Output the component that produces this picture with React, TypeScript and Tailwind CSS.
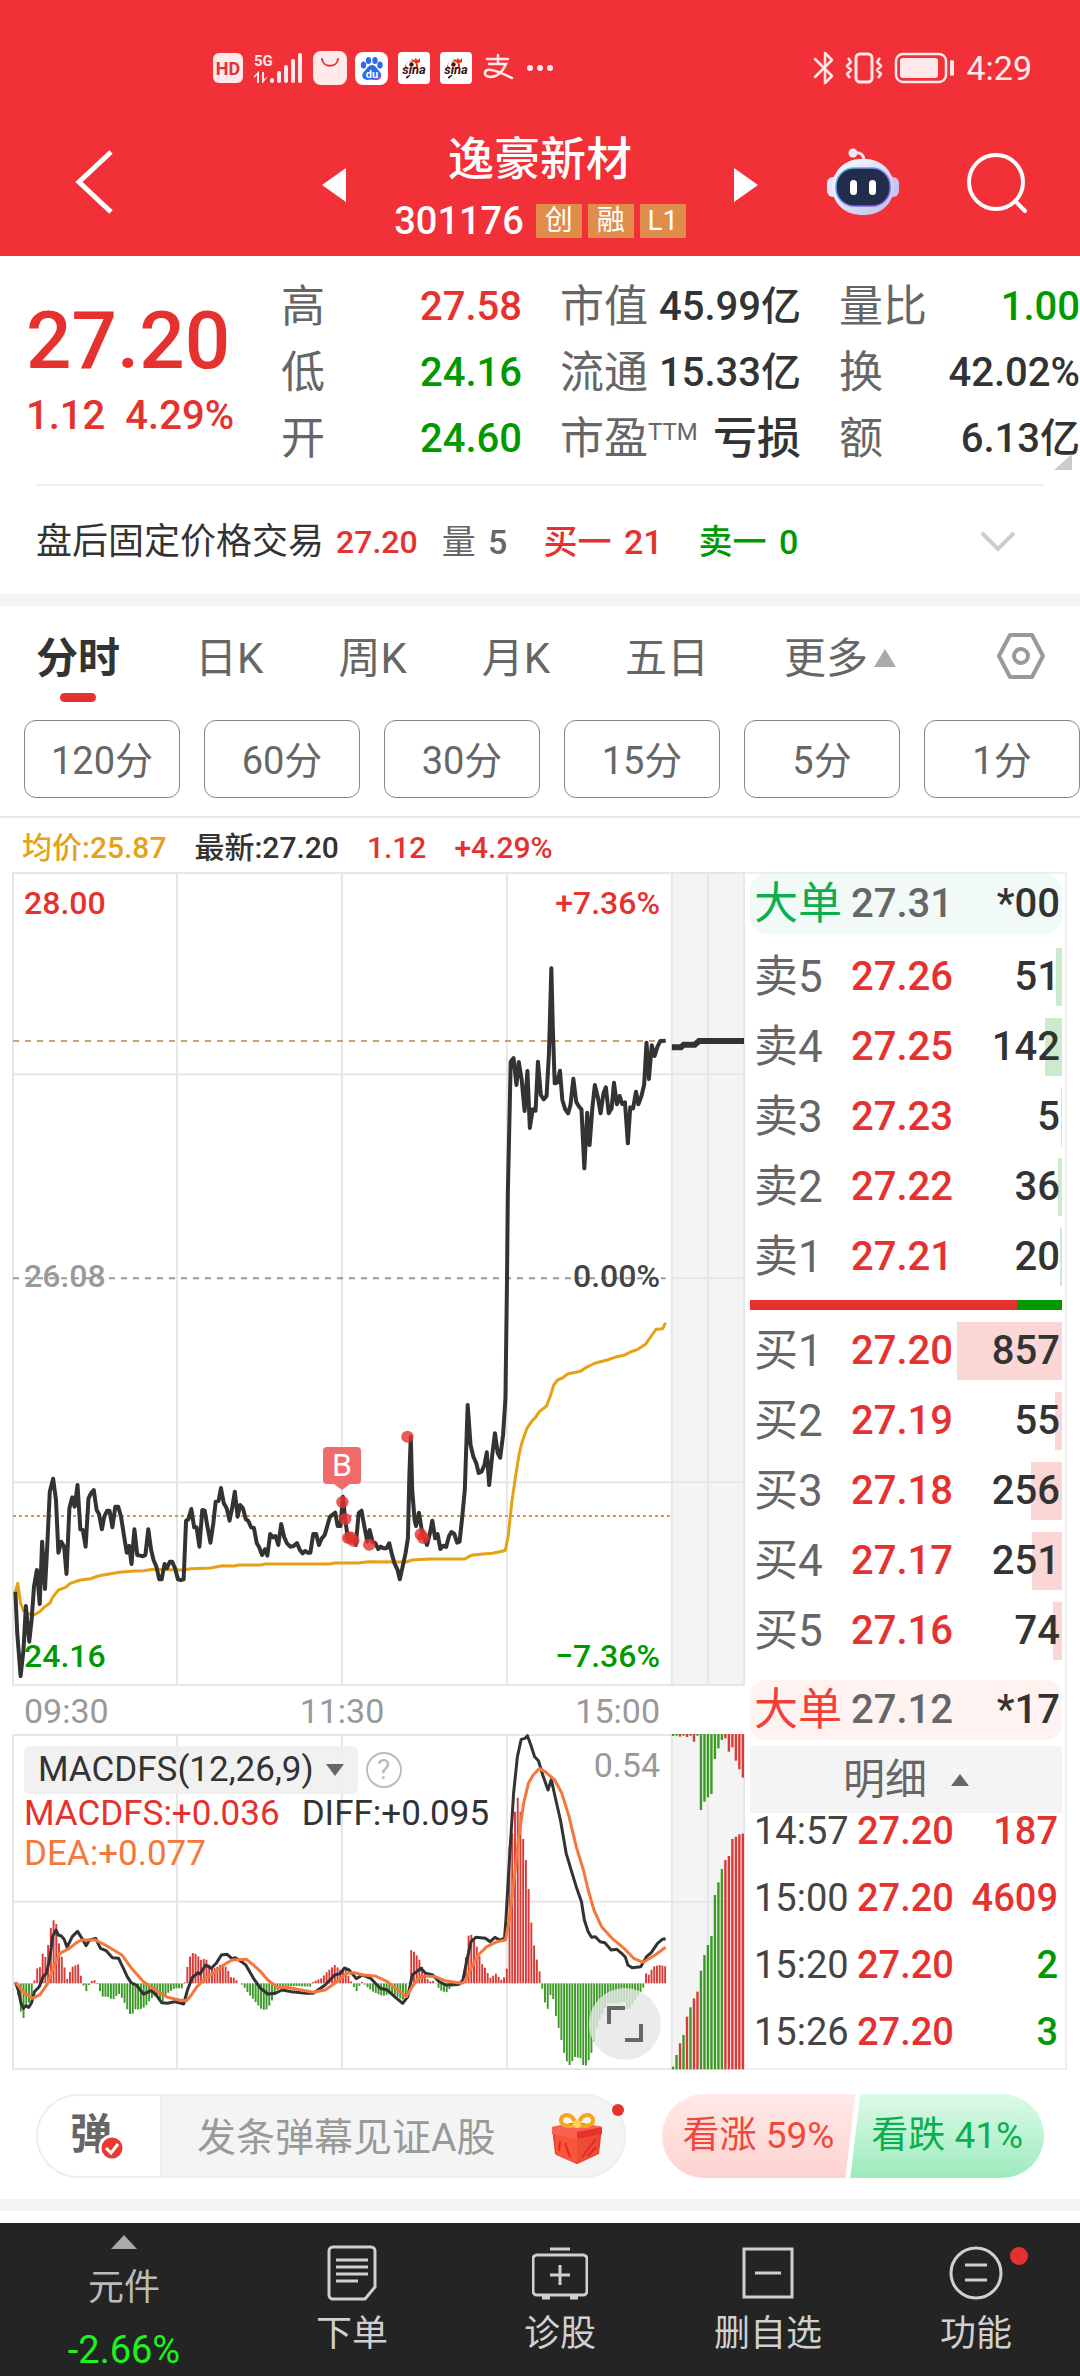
import React from 'react';
import clsx from 'clsx';

type Point = [number, number];

const STATS = [
    [
        { label: '高', value: '27.58', color: 'text-[#e5322f]' },
        { label: '低', value: '24.16', color: 'text-[#009900]' },
        { label: '开', value: '24.60', color: 'text-[#009900]' },
    ],
    [
        { label: '市值', value: '45.99亿', color: 'text-[#333333]' },
        { label: '流通', value: '15.33亿', color: 'text-[#333333]' },
        { label: '市盈', sup: 'TTM', value: '亏损', color: 'text-[#333333]' },
    ],
    [
        { label: '量比', value: '1.00', color: 'text-[#009900]' },
        { label: '换', value: '42.02%', color: 'text-[#333333]' },
        { label: '额', value: '6.13亿', color: 'text-[#333333]' },
    ],
];

const TABS = ['分时', '日K', '周K', '月K', '五日'];
const PERIODS = ['120分', '60分', '30分', '15分', '5分', '1分'];

const SELL_ORDERS = [
    { name: '卖5', price: '27.26', qty: 51 },
    { name: '卖4', price: '27.25', qty: 142 },
    { name: '卖3', price: '27.23', qty: 5 },
    { name: '卖2', price: '27.22', qty: 36 },
    { name: '卖1', price: '27.21', qty: 20 },
];

const BUY_ORDERS = [
    { name: '买1', price: '27.20', qty: 857 },
    { name: '买2', price: '27.19', qty: 55 },
    { name: '买3', price: '27.18', qty: 256 },
    { name: '买4', price: '27.17', qty: 251 },
    { name: '买5', price: '27.16', qty: 74 },
];

const TICKS = [
    { time: '14:57', price: '27.20', qty: '187', up: true },
    { time: '15:00', price: '27.20', qty: '4609', up: true },
    { time: '15:20', price: '27.20', qty: '2', up: false },
    { time: '15:26', price: '27.20', qty: '3', up: false },
];

const PRICE_LINE =
    '32,905 36,1030 43,1158 49,1080 54,948 58,1010 61,1055 66,990 71,890 77,840 83,942 88,755 94,897 99,760 104,605 111,566 117,630 122,788 128,755 134,770 139,852 145,655 151,622 156,650 162,585 168,718 173,720 179,770 185,625 190,610 196,600 202,660 207,672 213,718 218,680 224,662 229,662 235,712 241,650 247,650 253,680 259,735 265,788 270,768 275,822 281,718 287,795 293,797 299,799 304,795 310,718 316,780 321,810 327,830 333,868 338,868 344,822 349,835 355,815 360,815 366,835 372,868 378,870 384,868 389,692 394,688 400,657 406,712 411,712 417,770 423,660 428,662 434,712 440,758 446,700 451,635 457,633 462,594 468,640 474,655 480,692 486,650 491,605 497,680 502,645 508,655 514,688 519,692 525,712 531,714 537,760 542,772 548,795 554,778 559,797 565,732 571,742 576,738 582,765 588,702 594,740 600,760 607,770 614,768 621,759 627,780 633,790 638,783 644,788 649,788 655,732 661,732 667,765 673,745 679,735 684,710 690,680 695,675 701,668 706,708 712,708 717,620 722,690 727,740 733,755 738,750 744,765 750,670 756,662 762,710 768,755 773,720 779,755 785,760 791,777 796,770 802,775 808,775 814,760 819,790 825,820 831,838 836,868 842,830 848,790 853,745 856,560 859,440 862,600 867,690 870,708 876,668 882,720 887,745 893,765 899,730 904,692 910,745 915,732 921,777 927,767 933,771 939,738 944,726 950,732 956,758 961,755 966,690 972,600 978,345 984,465 990,500 996,520 1001,549 1007,545 1013,525 1018,487 1023,585 1029,500 1035,430 1041,490 1046,503 1052,435 1057,325 1060,0 1062,-290 1068,-685 1074,-696 1080,-615 1085,-684 1091,-630 1097,-537 1103,-657 1108,-486 1114,-542 1120,-538 1125,-685 1131,-585 1137,-572 1143,-582 1148,-710 1153,-965 1156,-790 1160,-620 1165,-622 1171,-658 1176,-570 1182,-542 1188,-530 1193,-555 1199,-634 1205,-565 1211,-550 1216,-542 1222,-365 1228,-532 1233,-435 1239,-550 1244,-615 1250,-580 1256,-530 1262,-590 1267,-608 1273,-530 1279,-545 1284,-622 1290,-557 1296,-582 1301,-558 1307,-563 1313,-440 1318,-548 1324,-545 1330,-595 1335,-557 1341,-580 1347,-615 1352,-742 1357,-633 1363,-734 1369,-702 1375,-730 1381,-747 1392,-748';

const AVERAGE_LINE =
    '32,905 37,880 43,940 49,962 55,970 71,975 83,965 92,952 104,940 110,922 122,900 136,893 147,880 168,870 190,866 205,858 225,853 250,847 280,843 300,842 320,838 380,840 400,836 440,834 465,827 490,828 500,825 545,825 555,822 690,822 700,819 750,819 770,815 850,816 862,810 900,807 972,807 985,796 1010,792 1030,790 1050,784 1057,780 1063,735 1070,640 1078,560 1086,490 1092,455 1102,415 1113,392 1120,382 1128,365 1143,348 1150,322 1158,285 1166,270 1176,264 1187,252 1214,244 1225,233 1245,219 1270,210 1290,200 1305,196 1318,186 1334,178 1350,163 1362,138 1372,118 1386,116 1392,98';

const TRADE_DOTS: Point[] = [[716, 636], [722, 687], [728, 744], [733, 742], [739, 752], [772, 764], [852, 440], [880, 733], [885, 744]];

const DIFF_LINE =
    '32,787 38,810 44,850 49,865 54,857 60,862 66,848 72,815 82,800 90,770 97,760 104,715 110,650 117,630 122,645 128,648 134,658 140,682 151,650 162,634 170,652 180,677 187,660 200,655 210,685 222,692 235,713 248,715 258,745 266,770 274,788 285,795 300,822 316,812 325,822 338,848 350,850 365,845 384,852 392,810 402,773 414,758 418,762 430,735 442,745 452,730 463,705 475,703 485,716 492,713 505,725 514,735 530,775 545,805 560,822 575,820 590,810 610,815 640,820 655,820 668,807 680,795 700,765 712,760 720,744 730,750 745,776 758,765 775,775 795,805 810,810 825,830 842,850 853,830 862,765 880,745 890,760 905,765 918,785 933,795 960,793 968,780 975,730 985,665 995,652 1015,655 1025,665 1035,652 1045,660 1055,655 1058,600 1064,450 1074,220 1082,110 1090,58 1098,55 1103,47 1110,75 1118,110 1126,122 1135,165 1146,210 1153,178 1160,225 1172,300 1184,400 1194,448 1205,500 1216,545 1222,600 1230,635 1237,652 1245,650 1255,665 1265,668 1278,690 1290,688 1300,700 1308,712 1313,735 1322,743 1340,740 1352,710 1362,698 1375,670 1385,658 1392,656';

const DEA_LINE =
    '32,787 40,800 52,820 67,835 83,825 100,790 112,740 125,700 145,685 160,668 170,660 200,660 220,675 255,705 275,745 300,785 325,810 350,832 375,840 390,842 400,825 412,800 430,775 450,755 470,733 485,720 515,718 530,735 545,755 560,780 580,802 605,803 630,810 655,817 680,810 700,790 725,760 740,758 760,765 785,768 810,785 850,830 862,800 875,775 890,768 910,770 930,782 965,790 972,785 985,745 1000,705 1018,680 1040,665 1057,660 1065,600 1075,480 1085,350 1095,250 1105,190 1115,165 1128,146 1140,155 1160,180 1175,220 1190,290 1205,380 1220,450 1230,510 1242,570 1258,620 1280,655 1305,685 1325,715 1345,727 1370,705 1392,682';

// histogram outline, bars are sampled from it once per minute
const HISTOGRAM: Point[] = [
    [32, 0], [38, -35], [44, -90], [49, -105], [54, -62], [66, -55], [71, 2], [77, 45], [83, 45], [88, 92], [94, 75], [99, 100], [105, 160], [111, 190], [117, 185], [122, 130], [128, 85], [134, 55], [139, 8], [145, 30], [151, 50], [156, 50], [162, 65], [168, 28], [173, 2], [179, -28], [185, -8], [190, 5], [196, 12], [202, 2], [207, -15], [213, -40], [225, -40], [236, -50], [248, -30], [258, -50], [265, -75], [275, -100], [281, -78], [293, -78], [304, -70], [316, -45], [328, -35], [340, -55], [350, -30], [365, -15], [384, -15], [389, 30], [394, 65], [400, 92], [411, 88], [420, 70], [430, 75], [440, 50], [450, 45], [465, 60], [475, 45], [485, 12], [491, 20], [497, 2], [508, -5], [519, -30], [531, -50], [548, -80], [559, -78], [571, -45], [582, -15], [600, -8], [620, -8], [649, -10], [655, 5], [672, 15], [684, 35], [700, 55], [712, 40], [720, 48], [733, 10], [739, -8], [745, -25], [752, -6], [758, 6], [765, -8], [780, -25], [800, -38], [820, -30], [842, -50], [853, -25], [859, 100], [864, 98], [876, 75], [888, 30], [897, 5], [905, 8], [910, 2], [920, -20], [933, -28], [944, -10], [961, -8], [967, 10], [973, 60], [978, 140], [984, 150], [995, 120], [1007, 60], [1018, 40], [1023, 15], [1030, 20], [1035, 32], [1050, 8], [1055, 20], [1060, 45], [1064, 400], [1074, 470], [1080, 562], [1086, 550], [1092, 460], [1097, 395], [1103, 340], [1108, 225], [1114, 145], [1120, 80], [1126, 60], [1131, 8], [1137, -40], [1143, -78], [1148, -75], [1153, -12], [1160, -75], [1165, -120], [1171, -145], [1177, -195], [1182, -220], [1188, -245], [1194, -245], [1200, -220], [1215, -225], [1222, -255], [1230, -235], [1239, -200], [1250, -120], [1270, -60], [1290, -60], [1305, -55], [1313, -85], [1330, -45], [1345, -15], [1351, 30], [1358, 25], [1365, 50], [1380, 55], [1400, 48],
];

// after-hours columns: [bottom of the upper bar, top of the lower bar], upper colour, lower colour
const AFTER_HOURS: [number, number, string, string][] = [
    [48, 1040, 'g', 'g'], [47, 1005, 'g', 'g'], [50, 970, 'r', 'r'], [47, 945, 'g', 'g'], [51, 890, 'r', 'r'], [47, 862, 'r', 'g'], [65, 835, 'r', 'r'],
    [47, 815, 'g', 'r'], [270, 752, 'g', 'g'], [245, 705, 'g', 'g'], [232, 675, 'g', 'g'], [222, 648, 'g', 'g'], [117, 525, 'g', 'g'], [85, 487, 'g', 'g'],
    [60, 447, 'g', 'g'], [55, 420, 'r', 'r'], [95, 408, 'r', 'r'], [82, 357, 'r', 'r'], [122, 350, 'r', 'r'], [148, 343, 'r', 'r'], [173, 341, 'r', 'r'],
];

const barColor = (code: string) => (code === 'r' ? '#d93a36' : '#3a9a25');

const sampleHistogram = (x: number) => {
    const next = HISTOGRAM.findIndex(point => point[0] >= x);
    if (next <= 0) return 0;
    const [x0, y0] = HISTOGRAM[next - 1];
    const [x1, y1] = HISTOGRAM[next];
    return y0 + ((x - x0) / (x1 - x0)) * (y1 - y0);
};

const BARS: Point[] = Array.from({ length: 239 }, (_, i) => {
    const x = 32 + i * 5.71;
    return [x, sampleHistogram(x)];
});

const Triangle: React.FC<{ className?: string; points: string }> = ({ className, points }) => (
    <svg className={className} viewBox="0 0 24 24" preserveAspectRatio="none" fill="currentColor" aria-hidden="true">
        <polygon points={points} />
    </svg>
);

const UP = '12,0 24,24 0,24';
const DOWN = '0,0 24,0 12,24';
const LEFT = '0,12 24,0 24,24';
const RIGHT = '0,0 24,12 0,24';

const SinaIcon: React.FC = () => (
    <svg className="h-8 w-8" viewBox="0 0 32 32" aria-label="sina">
        <rect width="32" height="32" rx="4" fill="#fff" />
        <path d="M7 16c0-5 4-7 7-7l-1-2 4 1 0-2 3 2 2-2 0 4c-1 1-2 1-3 1 2 2 1 5-1 6z" fill="#e8391d" />
        <ellipse cx="13" cy="13" rx="5" ry="3.600" fill="#fff" />
        <circle cx="13.500" cy="12.500" r="2.200" fill="#3a1410" />
        <text x="16" y="22" textAnchor="middle" fontSize="13" fontWeight="700" fontStyle="italic" fill="#3a1410">sina</text>
        <path d="M10 24c-1 1-2 2-1 2l3-3" fill="none" stroke="#3a1410" strokeWidth="1.200" />
    </svg>
);

const StatusBar: React.FC = () => (
    <div className="flex h-[126px] items-center justify-between pt-[10px] pr-12 pl-[213px] text-[#ffe9ea]">
        <div className="flex items-center">
            <svg className="h-[30px] w-[30px]" viewBox="0 0 30 30" aria-hidden="true">
                <rect width="30" height="30" rx="6" fill="#ffe9ea" />
                <text x="15" y="22" textAnchor="middle" fontSize="18" fontWeight="700" fill="#dd3339">HD</text>
            </svg>
            <svg className="ml-[11px] h-8 w-[50px]" viewBox="0 0 50 32" fill="currentColor" aria-hidden="true">
                <text x="0" y="14" fontSize="15" fontWeight="700">5G</text>
                <path d="M0 24l5-5v12H3v-8l-3 3zM8 20h2v7l4-3-5 7H8z" />
                <rect x="16" y="26" width="4" height="5" rx="2" />
                <rect x="23" y="19" width="4" height="12" rx="2" />
                <rect x="30" y="13" width="4" height="18" rx="2" />
                <rect x="37" y="7" width="4" height="24" rx="2" />
                <rect x="44" y="1" width="4" height="30" rx="2" />
            </svg>
            <svg className="ml-[9px] h-[34px] w-[34px]" viewBox="0 0 34 34" aria-hidden="true">
                <rect width="34" height="34" rx="8" fill="#ffe9ea" />
                <path d="M9 8c1 9 15 9 16 0" fill="none" stroke="#dd3339" strokeWidth="2" strokeLinecap="round" />
            </svg>
            <svg className="ml-2 h-[33px] w-[33px]" viewBox="0 0 33 33" aria-hidden="true">
                <rect width="33" height="33" rx="8" fill="#fff" />
                <g fill="#2a6cf0">
                    <ellipse cx="8.500" cy="13" rx="2.700" ry="3.600" />
                    <ellipse cx="13.500" cy="8.500" rx="2.700" ry="3.500" />
                    <ellipse cx="20" cy="8.500" rx="2.700" ry="3.500" />
                    <ellipse cx="25" cy="13" rx="2.700" ry="3.600" />
                    <path d="M17 13c4 0 5 4 8 7 3 4 0 8-4 8-3 0-5-1-8 0-5 0-7-4-5-7 3-3 5-8 9-8z" />
                </g>
                <path d="M13 28c3-1 5 0 8 0 4 0 6-3 5-6l-4 4z" fill="#a04be0" />
                <text x="17" y="26" textAnchor="middle" fontSize="11" fontWeight="700" fill="#fff">du</text>
            </svg>
            <div className="ml-[10px] flex gap-[10px]">
                <SinaIcon />
                <SinaIcon />
            </div>
            <svg className="ml-[10px] h-[30px] w-8" viewBox="0 0 32 30" fill="none" stroke="currentColor" strokeWidth="2.500" strokeLinecap="round" aria-hidden="true">
                <path d="M16 2v9M5 6h21M7 11h17c-4 9-10 13-16 13-8-1-6-8 1-7 8 1 14 5 21 8" />
            </svg>
            <svg className="ml-[13px] h-2 w-[27px]" viewBox="0 0 27 8" fill="currentColor" aria-hidden="true">
                <circle cx="3" cy="4" r="3" />
                <circle cx="13" cy="4" r="3" />
                <circle cx="23" cy="4" r="3" />
            </svg>
        </div>
        <div className="flex items-center">
            <svg className="h-[34px] w-6" viewBox="0 0 24 34" fill="none" stroke="currentColor" strokeWidth="2.500" strokeLinecap="round" strokeLinejoin="round" aria-hidden="true">
                <path d="M3 8l17 17-7 7V2l7 7L3 26" />
            </svg>
            <svg className="ml-2 h-8 w-10" viewBox="0 0 40 32" fill="none" stroke="currentColor" strokeWidth="3" strokeLinejoin="round" aria-hidden="true">
                <rect x="12" y="2" width="16" height="28" rx="4" />
                <path d="M4 6l3 4-4 4 4 4-4 4 3 4M36 6l-3 4 4 4-4 4 4 4-3 4" strokeWidth="2.500" />
            </svg>
            <svg className="ml-[10px] h-8 w-[62px]" viewBox="0 0 62 32" aria-hidden="true">
                <rect x="2" y="2" width="50" height="28" rx="7" fill="none" stroke="currentColor" strokeWidth="2.500" />
                <rect x="6" y="6" width="38" height="20" rx="3" fill="currentColor" />
                <rect x="56" y="8" width="4" height="16" rx="2" fill="currentColor" />
            </svg>
            <span className="ml-[10px] text-[34px] leading-10">4:29</span>
        </div>
    </div>
);

const RobotIcon: React.FC = () => (
    <svg className="h-[68px] w-[72px]" viewBox="0 0 72 68" aria-hidden="true">
        <defs>
            <linearGradient id="shell" x1="0" y1="0" x2="1" y2="1">
                <stop offset="0" stopColor="#ffffff" />
                <stop offset="1" stopColor="#b9bdea" />
            </linearGradient>
            <linearGradient id="rim" x1="0" y1="0" x2="1" y2="1">
                <stop offset="0" stopColor="#5fc8f0" />
                <stop offset="1" stopColor="#8a3be8" />
            </linearGradient>
        </defs>
        <path d="M27 5c7-1 10 2 10 8" fill="none" stroke="#e6e2f2" strokeWidth="3" />
        <circle cx="26" cy="5" r="4.500" fill="#eceaf7" />
        <rect x="0" y="29" width="12" height="20" rx="6" fill="#e6e7f8" />
        <rect x="60" y="29" width="12" height="20" rx="6" fill="#c3c7ef" />
        <rect x="5" y="11" width="62" height="56" rx="28" fill="url(#shell)" />
        <rect x="9" y="20" width="54" height="38" rx="18" fill="#222c4c" stroke="url(#rim)" strokeWidth="1.500" />
        <rect x="23" y="32" width="7" height="15" rx="3.500" fill="#fff" />
        <rect x="42" y="32" width="7" height="15" rx="3.500" fill="#fff" />
    </svg>
);

const Header: React.FC = () => (
    <header className="bg-[#f13038] text-white">
        <StatusBar />
        <div className="grid h-[130px] grid-cols-[1fr_auto_1fr] items-center">
            <button type="button" aria-label="返回" className="mb-[18px] justify-self-start pl-[74px]">
                <svg className="h-16 w-10" viewBox="0 0 40 64" fill="none" stroke="currentColor" strokeWidth="5" aria-hidden="true">
                    <path d="M37 2L5 32l32 30" />
                </svg>
            </button>
            <div className="flex items-center gap-12 self-start">
                <button type="button" aria-label="上一只" className="mb-2">
                    <Triangle className="h-[34px] w-6" points={LEFT} />
                </button>
                <div className="pt-px text-center">
                    <h1 className="text-[46px] leading-[64px] font-medium">逸豪新材</h1>
                    <div className="flex h-[60px] items-center justify-center gap-[6px]">
                        <span className="mr-[6px] text-[38px] font-medium">301176</span>
                        {['创', '融', 'L1'].map(tag => (
                            <span key={tag} className="h-[34px] w-[46px] bg-[#e08d4b] text-[28px] leading-[34px]">{tag}</span>
                        ))}
                    </div>
                </div>
                <button type="button" aria-label="下一只" className="mb-2">
                    <Triangle className="h-[34px] w-6" points={RIGHT} />
                </button>
            </div>
            <div className="mb-[18px] flex items-center justify-end gap-[67px] pr-[52px]">
                <button type="button" aria-label="智能助手">
                    <RobotIcon />
                </button>
                <button type="button" aria-label="搜索">
                    <svg className="h-[62px] w-[62px]" viewBox="0 0 62 62" fill="none" stroke="currentColor" strokeWidth="4" strokeLinecap="round" aria-hidden="true">
                        <circle cx="30" cy="31" r="27" />
                        <path d="M49 50l10 10" />
                    </svg>
                </button>
            </div>
        </div>
    </header>
);

const Quote: React.FC = () => (
    <section className="relative flex pb-3">
        <div className="w-[281px] shrink-0 pt-[35px] pl-[26px] font-medium text-[#e5322f]">
            <p className="text-[80px] leading-[100px]">27.20</p>
            <p className="flex gap-5 text-[40px] leading-[50px] whitespace-nowrap">
                <span>1.12</span>
                <span>4.29%</span>
            </p>
        </div>
        <div className="grid flex-1 grid-cols-3 gap-x-[38px] pt-[18px]">
            {STATS.map(column => (
                <dl key={column[0].label}>
                    {column.map(item => (
                        <div key={item.label} className="flex h-[66px] items-center justify-between whitespace-nowrap">
                            <dt className="flex text-[44px] leading-[66px] text-[#666666]">
                                {item.label}
                                {'sup' in item && <span className="text-2xl leading-[52px]">{item.sup}</span>}
                            </dt>
                            <dd className={clsx('font-medium', 'sup' in item ? 'text-[44px]' : 'text-[40px]', item.color)}>{item.value}</dd>
                        </div>
                    ))}
                </dl>
            ))}
        </div>
        <svg className="absolute right-2 bottom-[14px] h-4 w-[18px]" viewBox="0 0 18 16" aria-hidden="true">
            <path d="M18 0v16H0z" fill="#cccccc" />
        </svg>
    </section>
);

const AfterHoursRow: React.FC = () => (
    <section className="mx-9 flex h-[110px] items-center border-t-2 border-[#eeeeee] pt-1 text-[34px] whitespace-nowrap">
        <span className="text-[36px] text-[#333333]">盘后固定价格交易</span>
        <span className="ml-3 text-[32px] font-medium text-[#e5322f]">27.20</span>
        <span className="ml-6 text-[#666666]">量 <span className="ml-1 font-medium">5</span></span>
        <span className="ml-9 font-medium text-[#e5322f]">买一 <span className="ml-1">21</span></span>
        <span className="ml-9 font-medium text-[#009900]">卖一 <span className="ml-1">0</span></span>
        <button type="button" aria-label="展开" className="mr-7 ml-auto">
            <svg className="h-6 w-9" viewBox="0 0 36 24" fill="none" stroke="#cccccc" strokeWidth="4" aria-hidden="true">
                <path d="M2 3l16 16L34 3" />
            </svg>
        </button>
    </section>
);

const ChartTabs: React.FC = () => (
    <nav>
        <div className="flex h-[100px] items-center gap-[75px] pr-[34px] pl-9 text-[42px] text-[#666666]">
            {TABS.map((tab, index) => (
                <button key={tab} type="button" className={clsx('relative h-full pt-1 whitespace-nowrap', index === 0 && 'font-bold text-[#333333]')}>
                    {tab}
                    {index === 0 && <span className="absolute bottom-1 left-6 h-[9px] w-9 rounded-full bg-[#e5322f]" />}
                </button>
            ))}
            <button type="button" className="flex items-center gap-[6px] pt-1 whitespace-nowrap">
                更多
                <Triangle className="h-[18px] w-[22px] text-[#aaaaaa]" points={UP} />
            </button>
            <button type="button" aria-label="设置" className="ml-auto">
                <svg className="h-12 w-[50px]" viewBox="0 0 50 48" fill="none" stroke="#999999" strokeWidth="4" strokeLinejoin="round" aria-hidden="true">
                    <path d="M14 3h22l11 21-11 21H14L3 24z" />
                    <circle cx="25" cy="24" r="7" />
                </svg>
            </button>
        </div>
        <div className="flex gap-6 border-b-2 border-[#e8e8e8] pt-[14px] pb-[18px] pl-6">
            {PERIODS.map(period => (
                <button key={period} type="button" className="h-[78px] flex-1 rounded-xl border border-[#888888] pt-1 text-[38px] text-[#666666]">
                    {period}
                </button>
            ))}
        </div>
    </nav>
);

const PriceChart: React.FC = () => (
    <div className="relative text-[32px] leading-10 font-medium">
        <svg className="block h-[814px] w-full" viewBox="25 -1254 1533 2442" preserveAspectRatio="none" fill="none" role="img" aria-label="分时走势">
            <rect x="1403" y="-1254" width="155" height="2442" fill="#f4f4f4" />
            <path vectorEffect="non-scaling-stroke" stroke="#e6e6e6" strokeWidth="2" d="M27-1251H1556V1185H27zM370-1251V1185M715-1251V1185M1060-1251V1185M1405-1251V1185M1480-1251V1185M27-647H1556M27 577H1556M1405-35H1556" />
            <path vectorEffect="non-scaling-stroke" d="M27-747H1392" stroke="#c9a46c" strokeWidth="2" strokeDasharray="6 6" />
            <path vectorEffect="non-scaling-stroke" d="M27-35H1392" stroke="#999999" strokeWidth="2" strokeDasharray="6 6" />
            <path vectorEffect="non-scaling-stroke" d="M27 678H1405" stroke="#cf9a4d" strokeWidth="2" strokeDasharray="3 3" />
            <polyline vectorEffect="non-scaling-stroke" points={AVERAGE_LINE} stroke="#e6a117" strokeWidth="3" strokeLinejoin="round" />
            <polyline vectorEffect="non-scaling-stroke" points={PRICE_LINE} stroke="#333333" strokeWidth="4" strokeLinejoin="round" />
            <path vectorEffect="non-scaling-stroke" d="M1405-728H1424L1430-736H1453L1462-747H1556" stroke="#333333" strokeWidth="6" />
            {TRADE_DOTS.map(([x, y]) => (
                <ellipse key={`${x}-${y}`} cx={x} cy={y} rx="13" ry="18" fill="#e5322f" fillOpacity="0.8" />
            ))}
        </svg>
        <span className="absolute top-[11px] left-3 text-[#e5322f]">28.00</span>
        <span className="absolute top-[11px] right-[85px] text-[#e5322f]">+7.36%</span>
        <span className="absolute top-[384px] left-3 text-[#999999]">26.08</span>
        <span className="absolute top-[384px] right-[85px] text-[#444444]">0.00%</span>
        <span className="absolute top-[764px] left-3 text-[#009900]">24.16</span>
        <span className="absolute top-[764px] right-[85px] text-[#009900]">−7.36%</span>
        <div className="absolute top-[575px] left-[45%] flex w-[38px] -translate-x-1/2 flex-col items-center text-[#ef6c6a]">
            <span className="w-full rounded-sm bg-[#ef6c6a] text-center leading-[37px] font-normal text-white">B</span>
            <Triangle className="h-[6px] w-4" points={DOWN} />
        </div>
    </div>
);

const MacdChart: React.FC = () => (
    <div className="relative">
        <svg className="block h-[336px] w-full" viewBox="25 42 1533 1008" preserveAspectRatio="none" fill="none" role="img" aria-label="MACDFS">
            <rect x="1403" y="42" width="155" height="1008" fill="#f4f4f4" />
            <path vectorEffect="non-scaling-stroke" stroke="#e6e6e6" strokeWidth="2" d="M27 45H1556V1047H27zM370 45V1047M715 45V1047M1060 45V1047M1405 45V1047M1480 45V1047M27 545H1556" />
            {BARS.map(([x, h]) => (
                <rect key={x} x={x - 2} y={h > 0 ? 790 - h : 790} width="4" height={Math.abs(h)} fill={h > 0 ? '#d93a36' : '#3a9a25'} />
            ))}
            {AFTER_HOURS.map(([upper, lower, upperColor, lowerColor], i) => (
                <g key={lower}>
                    <rect x={1405 + i * 7.300} y="42" width="5" height={upper - 42} fill={barColor(upperColor)} />
                    <rect x={1405 + i * 7.300} y={lower} width="5" height={1048 - lower} fill={barColor(lowerColor)} />
                </g>
            ))}
            <polyline vectorEffect="non-scaling-stroke" points={DIFF_LINE} stroke="#333333" strokeWidth="3" strokeLinejoin="round" />
            <polyline vectorEffect="non-scaling-stroke" points={DEA_LINE} stroke="#f4783c" strokeWidth="3" strokeLinejoin="round" />
        </svg>
        <div className="absolute top-3 left-3 text-[35px] leading-10">
            <div className="flex items-center gap-2">
                <button type="button" className="flex h-12 items-center gap-3 rounded-md bg-[#f0f0f0]/90 px-[14px] text-[#333333]">
                    MACDFS(12,26,9)
                    <Triangle className="h-3 w-[18px] text-[#666666]" points={DOWN} />
                </button>
                <button type="button" aria-label="说明" className="h-9 w-9 rounded-full border-2 border-[#bbbbbb] text-[28px] leading-8 text-[#bbbbbb]">?</button>
            </div>
            <p className="text-[#333333]"><span className="mr-[22px] text-[#e5322f]">MACDFS:+0.036</span>DIFF:+0.095</p>
            <p className="text-[#f4783c]">DEA:+0.077</p>
        </div>
        <span className="absolute top-[11px] right-[85px] text-[34px] leading-10 text-[#999999]">0.54</span>
        <button type="button" aria-label="全屏" className="absolute right-[84px] bottom-[10px] flex h-[72px] w-[72px] items-center justify-center rounded-full bg-[#e6e6e6]/80">
            <svg className="h-10 w-10" viewBox="0 0 40 40" fill="none" stroke="#666666" strokeWidth="4" aria-hidden="true">
                <path d="M4 20V4h16M36 20v16H20" />
            </svg>
        </button>
    </div>
);

const LargeOrder: React.FC<{ price: string; qty: string; side: 'sell' | 'buy' }> = ({ price, qty, side }) => (
    <div className={clsx('flex h-[60px] items-center rounded-2xl pr-[2px] pl-1 text-[40px] font-medium', side === 'sell' ? 'bg-[#f1faf6]' : 'bg-[#fff3f2]')}>
        <span className={clsx('w-[97px] text-[44px] font-normal', side === 'sell' ? 'text-[#0caf50]' : 'text-[#f0403a]')}>大单</span>
        <span className="text-[#666666]">{price}</span>
        <span className="ml-auto text-[#333333]">{qty}</span>
    </div>
);

const OrderTable: React.FC<{ orders: typeof SELL_ORDERS; side: 'sell' | 'buy' }> = ({ orders, side }) => (
    <table className="w-full table-fixed text-[40px] font-medium">
        <tbody>
            {orders.map(order => (
                <tr key={order.name} className="h-[70px]">
                    <th scope="row" className="w-[101px] pl-1 text-left text-[44px] leading-[60px] font-normal text-[#666666]">{order.name}</th>
                    <td className="w-[110px] text-[#e5322f]">{order.price}</td>
                    <td className="relative pr-[2px] text-right text-[#333333]">
                        <span
                            className={clsx('absolute top-[6px] right-0 bottom-[6px]', side === 'sell' ? 'bg-[#009900]/20' : 'bg-[#e5322f]/20')}
                            style={{ width: `${Math.round((order.qty / 857) * 104)}%` }}
                        />
                        <span className="relative">{order.qty}</span>
                    </td>
                </tr>
            ))}
        </tbody>
    </table>
);

const OrderBook: React.FC = () => (
    <aside className="min-w-0 flex-[312] border-2 border-l-0 border-[#eeeeee] pr-[3px] pl-[5px]">
        <LargeOrder price="27.31" qty="*00" side="sell" />
        <div className="mt-2">
            <OrderTable orders={SELL_ORDERS} side="sell" />
        </div>
        <div className="mt-2 mb-[6px] flex h-[10px]">
            <span className="flex-[857] bg-[#e5322f]" />
            <span className="flex-[145] bg-[#009900]" />
        </div>
        <OrderTable orders={BUY_ORDERS} side="buy" />
        <div className="mt-[14px]">
            <LargeOrder price="27.12" qty="*17" side="buy" />
        </div>
        <button type="button" className="mt-[6px] flex h-[67px] w-full items-center justify-center gap-6 bg-[#f4f4f4] text-[42px] text-[#666666]">
            明细
            <Triangle className="h-3 w-[18px]" points={UP} />
        </button>
        <table className="w-full table-fixed text-[38px] leading-9 font-medium">
            <tbody>
                {TICKS.map(tick => (
                    <tr key={tick.time} className="h-[67px] align-top last:h-9">
                        <td className="w-[107px] pl-1 font-normal text-[#444444]">{tick.time}</td>
                        <td className="w-[98px] text-[#e5322f]">{tick.price}</td>
                        <td className={clsx('pr-1 text-right', tick.up ? 'text-[#e5322f]' : 'text-[#009900]')}>{tick.qty}</td>
                    </tr>
                ))}
            </tbody>
        </table>
    </aside>
);

const GiftIcon: React.FC = () => (
    <svg className="h-[52px] w-[50px]" viewBox="0 0 50 52" aria-hidden="true">
        <path d="M0 15l25-5 25 5-3 27-22 10L3 42z" fill="#f0392a" />
        <path d="M25 22l22-5-1 25-21 10z" fill="#ee4b35" />
        <path d="M3 20l22 5v27L4 43z" fill="#f9553a" />
        <path d="M0 15l25-5 25 5v7l-25 5-25-5z" fill="#f76350" />
        <path d="M25 20l25-5v7l-25 5z" fill="#e5322b" />
        <path d="M8 29l-1 10M13 31l5 14M44 27L30 45M44 35L36 44" stroke="#dc2a2a" strokeWidth="2" />
        <path d="M24 13C14 16 8 12 9 7c2-6 12-6 15 6zM26 13c10 3 16-1 15-6-2-6-12-6-15 6z" fill="none" stroke="#f6a51f" strokeWidth="4" />
        <circle cx="25" cy="12" r="4" fill="#ffd25a" />
    </svg>
);

const Discussion: React.FC = () => (
    <section className="flex gap-9 px-9 pt-6 pb-[21px]">
        <div className="relative flex h-[84px] min-w-0 flex-[588] items-center rounded-full border-2 border-[#eeeeee] bg-[#f4f4f4]">
            <button type="button" aria-label="弹幕开关" className="relative h-full w-[124px] shrink-0 rounded-l-full border-r-2 border-[#eeeeee] bg-white pr-4 pb-1 text-[42px] font-bold text-[#666666]">
                弹
                <svg className="absolute top-[38px] left-[60px] h-7 w-7" viewBox="0 0 28 28" aria-hidden="true">
                    <circle cx="14" cy="14" r="12" fill="#e83a30" stroke="#fff" strokeWidth="3" />
                    <path d="M8 14l5 5 7-9" fill="none" stroke="#fff" strokeWidth="3" />
                </svg>
            </button>
            <input type="text" aria-label="发弹幕" placeholder="发条弹幕见证A股" className="h-full w-0 flex-1 pt-1 pl-[35px] text-[39px] outline-none placeholder:text-[#999999]" />
            <button type="button" aria-label="礼物" className="mt-1 mr-[22px]">
                <GiftIcon />
            </button>
            <span className="absolute top-2 right-0 h-3 w-3 rounded-full bg-[#e5322f]" />
        </div>
        <div className="flex h-[84px] min-w-0 flex-[384] text-[37px] whitespace-nowrap">
            <button type="button" className="flex-1 rounded-l-full bg-linear-to-b from-[#ffeae8] to-[#fdd3cf] text-[#f0483c] [clip-path:polygon(0_0,100%_0,calc(100%-10px)_100%,0_100%)]">
                看涨 59%
            </button>
            <button type="button" className="-ml-[5px] flex-1 rounded-r-full bg-linear-to-b from-[#dcfae7] to-[#9debbe] text-[#0caf50] [clip-path:polygon(10px_0,100%_0,100%_100%,0_100%)]">
                看跌 41%
            </button>
        </div>
    </section>
);

const NAV_ITEMS = [
    {
        label: '下单',
        icon: <path d="M9 2h38a4 4 0 014 4v36l-10 12H9a4 4 0 01-4-4V6a4 4 0 014-4zM12 15h32M12 22h32M12 29h32M12 36h22" />,
    },
    {
        label: '诊股',
        icon: <path d="M5 10h46a4 4 0 014 4v32a4 4 0 01-4 4H5a4 4 0 01-4-4V14a4 4 0 014-4zM18 4h20M28 20v20M18 30h20M10 53h8M38 53h8" />,
    },
    { label: '删自选', icon: <path d="M4 4h48v48H4zM15 28h26" /> },
    { label: '功能', icon: <path d="M28 3a25 25 0 100 50 25 25 0 000-50zM17 20h22M17 35h22" />, badge: true },
];

const BottomNav: React.FC = () => (
    <nav className="grid h-[153px] grid-cols-[248fr_208fr_208fr_208fr_208fr] bg-[#242424] text-[36px] leading-[50px] text-[#d0d0d0]">
        <button type="button" className="flex flex-col items-center pt-3 text-[#bbbbbb]">
            <Triangle className="h-[14px] w-[26px] shrink-0 text-[#aaaaaa]" points={UP} />
            <span className="mt-[14px]">元件</span>
            <span className="mt-3 text-[38px] text-[#1df31d]">-2.66%</span>
        </button>
        {NAV_ITEMS.map(item => (
            <button key={item.label} type="button" className="flex flex-col items-center pt-[22px]">
                <span className="relative">
                    <svg className="h-14 w-14" viewBox="0 0 56 56" fill="none" stroke="currentColor" strokeWidth="3" aria-hidden="true">
                        {item.icon}
                    </svg>
                    {item.badge && <span className="absolute top-[2px] -right-6 h-[18px] w-[18px] rounded-full bg-[#e5322f]" />}
                </span>
                <span className="mt-2">{item.label}</span>
            </button>
        ))}
    </nav>
);

const App: React.FC = () => (
    <div className="min-h-screen bg-white font-[Roboto,'Noto_Sans_CJK_SC',sans-serif]">
        <Header />
        <Quote />
        <AfterHoursRow />
        <div className="h-3 bg-[#f4f4f4]" />
        <ChartTabs />
        <div className="flex h-[54px] items-center gap-7 pt-1 pl-[22px] text-[30px] font-medium whitespace-nowrap text-[#e5322f]">
            <span className="text-[#e6a117]">均价:25.87</span>
            <span className="text-[#333333]">最新:27.20</span>
            <span>1.12</span>
            <span>+4.29%</span>
        </div>
        <main className="flex pr-[13px] pl-3">
            <div className="min-w-0 flex-[733]">
                <PriceChart />
                <div className="grid h-12 grid-cols-3 items-center pr-[85px] pl-3 text-[34px] text-[#999999]">
                    <span>09:30</span>
                    <span className="text-center">11:30</span>
                    <span className="text-right">15:00</span>
                </div>
                <MacdChart />
            </div>
            <OrderBook />
        </main>
        <Discussion />
        <div className="mb-3 h-3 bg-[#f4f4f4]" />
        <BottomNav />
    </div>
);

export default App;
